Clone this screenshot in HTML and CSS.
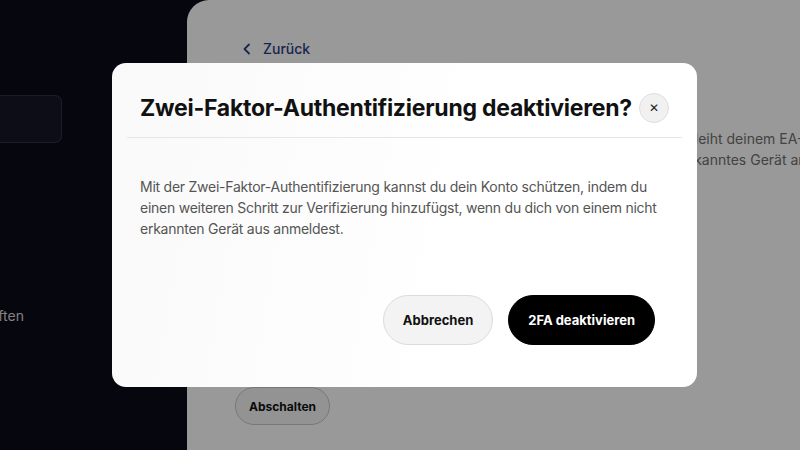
FILE: index.html
```html
<!doctype html>
<html>
  <head>
    <title>Sicherheit</title>
    <link rel="stylesheet" href="styles.css">
  </head>
  <body>
    <div class="app">
      <div class="sidebar">
        <div class="search"></div>
        <div class="nav-item">Eigenschaften</div>
      </div>
      <div class="main">
        <a class="back" href="#">
          <svg width="10" height="12" viewBox="0 0 10 12"><path d="M7 1.5 2.5 6 7 10.5" fill="none" stroke="currentColor" stroke-width="1.8" stroke-linecap="round" stroke-linejoin="round"/></svg>
          Zurück
        </a>
        <p class="intro">
          Die Zwei-Faktor-Authentifizierung ist für dein Konto aktiviert. Dies verleiht deinem EA-Konto zusätzlichen Schutz.<br>
          Du wirst nach einem Code gefragt, sobald du dich je über ein nicht erkanntes Gerät anmeldest.
        </p>
        <button class="btn-outline">Abschalten</button>
      </div>
    </div>
    <div class="overlay">
      <div class="modal">
        <div class="modal-header">
          <h2>Zwei-Faktor-Authentifizierung deaktivieren?</h2>
          <button class="close" aria-label="Schließen">&#x2715;</button>
        </div>
        <div class="modal-body">
          <p>
            Mit der Zwei-Faktor-Authentifizierung kannst du dein Konto schützen, indem du
            einen weiteren Schritt zur Verifizierung hinzufügst, wenn du dich von einem nicht
            erkannten Gerät aus anmeldest.
          </p>
        </div>
        <div class="modal-footer">
          <button class="btn btn-light">Abbrechen</button>
          <button class="btn btn-dark">2FA deaktivieren</button>
        </div>
      </div>
    </div>
  </body>
</html>
```
FILE: styles.css
```css
html, body {
  height: 100%;
  margin: 0;
}
body {
  font-family: Inter, "Noto Sans", sans-serif;
  overflow: hidden;
}
.app {
  display: flex;
  height: 100%;
  background: #0a0a1a;
}
.sidebar {
  width: 187px;
  padding-top: 95px;
  color: #d8d8d8;
}
.search {
  height: 48px;
  width: 62px;
  box-sizing: border-box;
  border: 1px solid #2e3242;
  border-left: none;
  border-radius: 0 7px 7px 0;
  background: #141726;
}
.nav-item {
  margin-top: 164px;
  margin-left: -70px;
  font-size: 14px;
  white-space: nowrap;
}
.main {
  flex: 1;
  background: #fff;
  border-top-left-radius: 22px;
  padding: 40px 0 0 48px;
  overflow: hidden;
}
.back {
  display: flex;
  align-items: center;
  gap: 11px;
  margin-left: 7px;
  color: #2c3f82;
  text-decoration: none;
  font-size: 14px;
  font-weight: 500;
}
.intro {
  margin: 71px 0 0 0;
  font-size: 14px;
  line-height: 21px;
  color: #707070;
  white-space: nowrap;
}
.btn-outline {
  margin-top: 217px;
  height: 38px;
  padding: 0 13px;
  border: 1px solid #c8c8c8;
  border-radius: 19px;
  background: #f6f6f6;
  font-family: inherit;
  font-weight: 700;
  font-size: 12px;
  color: #111;
}
.overlay {
  position: fixed;
  inset: 0;
  background: rgba(0, 0, 0, 0.4);
  display: flex;
  align-items: center;
  justify-content: center;
}
.modal {
  width: 585px;
  height: 324px;
  margin-left: 9px;
  box-sizing: border-box;
  background: linear-gradient(100deg, #f9f9f9, #fff 60%);
  border-radius: 14px;
  display: flex;
  flex-direction: column;
}
.modal-header {
  display: flex;
  align-items: center;
  justify-content: space-between;
  margin: 0 15px;
  padding: 30px 13px 14px;
  border-bottom: 1px solid #e6e6e6;
}
.modal-header h2 {
  margin: 0;
  font-size: 23px;
  font-weight: 700;
  color: #111;
  letter-spacing: -0.25px;
  white-space: nowrap;
}
.close {
  flex: none;
  width: 30px;
  height: 30px;
  border-radius: 50%;
  border: 1px solid #dedede;
  background: #f1f1f1;
  font-size: 12px;
  color: #222;
  padding: 0;
}
.modal-body {
  padding: 38px 28px 0;
}
.modal-body p {
  margin: 0;
  font-size: 14px;
  line-height: 21px;
  letter-spacing: -0.25px;
  color: #555;
}
.modal-footer {
  margin-top: auto;
  display: flex;
  justify-content: flex-end;
  gap: 15px;
  padding: 0 42px 42px;
}
.btn {
  height: 50px;
  border-radius: 25px;
  font-family: inherit;
  font-weight: 700;
  font-size: 13px;
  padding: 0 19px;
}
.btn-light {
  background: #f3f3f3;
  border: 1px solid #dcdcdc;
  color: #111;
}
.btn-dark {
  background: #000;
  border: 1px solid #000;
  color: #fff;
}
```
